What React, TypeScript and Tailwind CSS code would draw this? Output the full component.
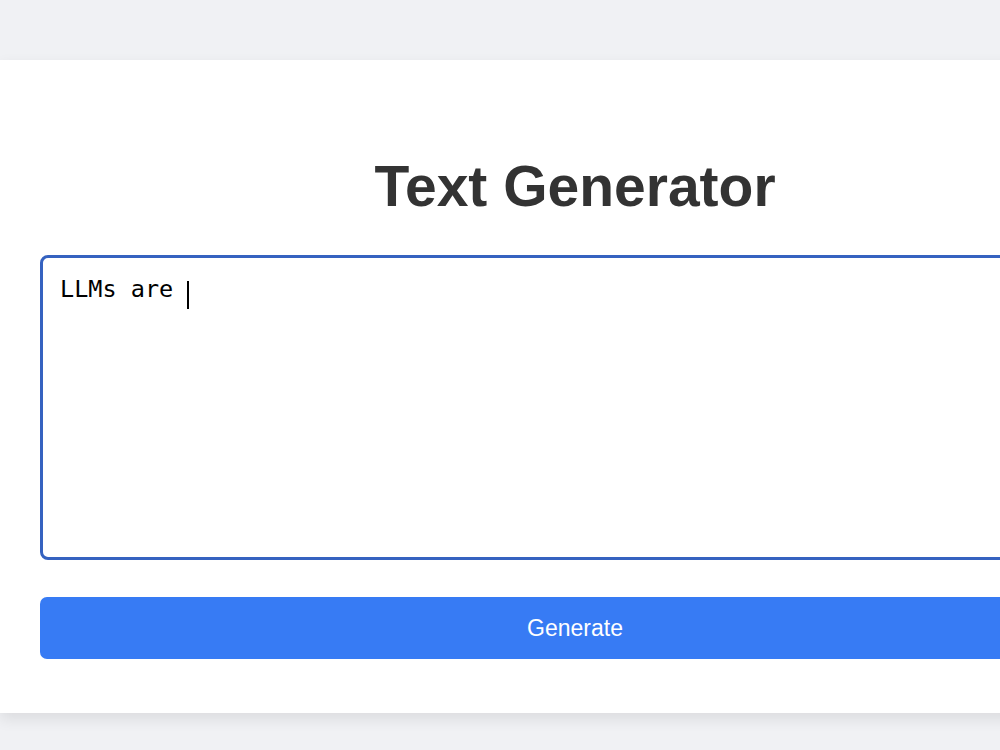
import React, { useState } from 'react';

// Simple prompt box with a generate button
const App: React.FC = () => {
    const [prompt] = useState('LLMs are ');

    return (
        <div className="w-[1000px] h-[750px] overflow-hidden bg-[#f0f1f4] pt-[60px]" style={{ fontFamily: '"Liberation Sans", Arial, sans-serif' }}>
            <div className="w-[1150px] bg-white px-[40px] pt-[94px] pb-[54px] shadow-[0_6px_14px_rgba(0,0,0,0.09)]">
                <h1 className="text-center text-[57px] leading-[64px] font-bold text-[#333333] mb-[37px]">Text Generator</h1>

                {/* prompt area (focused) */}
                <div
                    className="h-[305px] rounded-[8px] border-[3px] border-[#3562c0] py-[14px] pl-[17px] pr-[15px] text-[23.5px] leading-[1.5] text-black whitespace-pre"
                    style={{ fontFamily: '"DejaVu Sans Mono", "Liberation Mono", monospace' }}
                >
                    {prompt}
                    <span className="inline-block w-[1.5px] h-[28px] bg-black align-[-12px]" />
                </div>

                <button className="mt-[37px] w-full h-[62px] rounded-[7px] bg-[#377bf4] text-white text-[23px] flex items-center justify-center">
                    Generate
                </button>
            </div>
        </div>
    );
};

export default App;
